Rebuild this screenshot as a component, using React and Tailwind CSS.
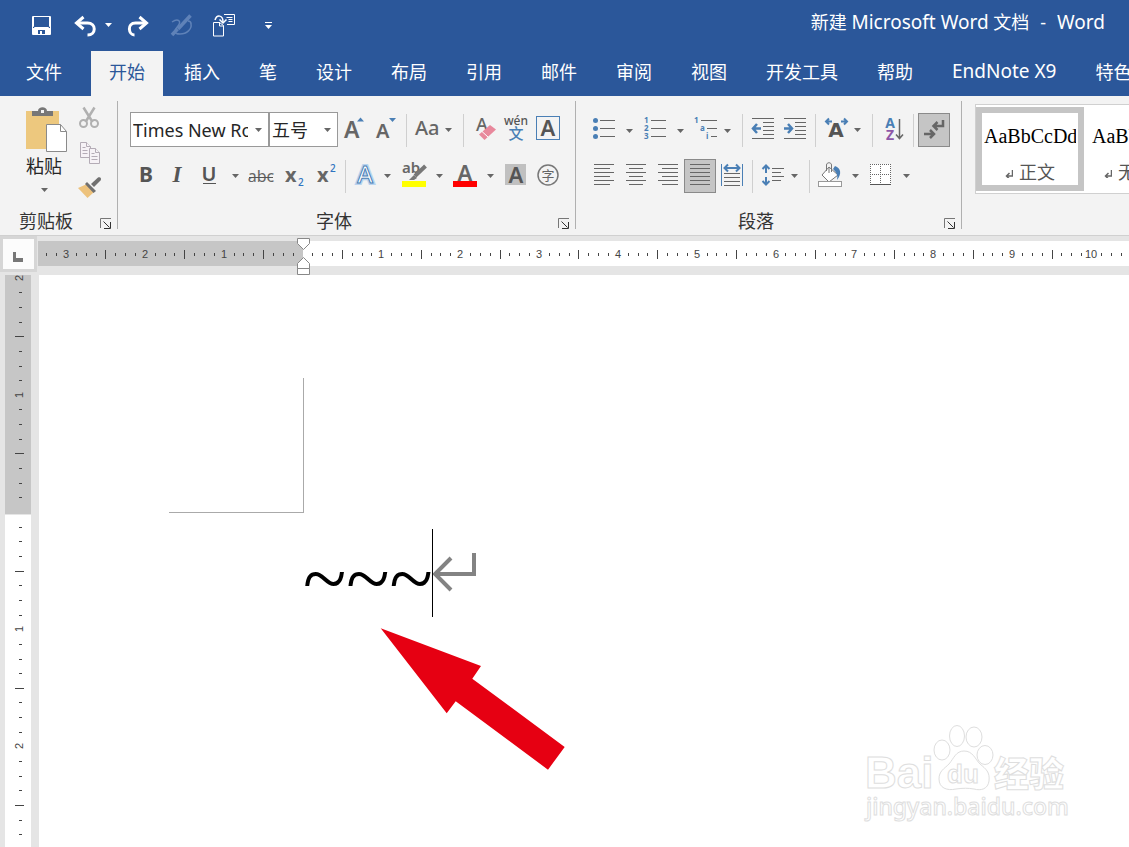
import React from 'react';

const GREY = '#666666';
const BLUE = '#4a7fb5';

const TABS = ['开始', '插入', '笔', '设计', '布局', '引用', '邮件', '审阅', '视图', '开发工具', '帮助', 'EndNote X9', '特色功能'];

const STYLES = [
  { name: '正文', active: true },
  { name: '无间隔', active: false },
];

const Arrow = ({ x, y, fill = GREY }) => <path d={`M${x} ${y}h7l-3.5 4z`} fill={fill} />;

const Tool = ({ label, w, active = false, children }) => (
  <button
    aria-label={label}
    className={active ? 'shrink-0 bg-[#c5c5c5] outline outline-1 -outline-offset-1 outline-[#8a8a8a]' : 'shrink-0'}
  >
    <svg width={w} height="34" className="block">
      {children}
    </svg>
  </button>
);

const Sep = () => <div className="h-[33px] w-px shrink-0 bg-[#cfcfcf]" />;

const Lines = ({ rows, color = GREY }) => (
  <g fill={color}>
    {rows.map(([x, y, w], i) => (
      <rect key={i} x={x} y={y} width={w} height="1" />
    ))}
  </g>
);

const GroupLabel = ({ name }) => (
  <div className="mt-auto flex h-4 items-center">
    <span className="flex-1 pr-2 text-center text-lg leading-4 text-[#333]">{name}</span>
    <button aria-label={`${name}设置`} className="self-end">
      <svg width="12" height="11" className="block" fill="none">
        <path d="M.5 10V.5H11" stroke="#777" />
        <path d="M3.500 3.500l6 6M10.500 4v6.500H4" stroke="#333" />
      </svg>
    </button>
  </div>
);

const Combo = ({ label, value, className }) => (
  <div className={`relative h-[35px] shrink-0 ${className}`}>
    <select
      aria-label={label}
      className="h-full w-full appearance-none border border-[#999] bg-white pr-5 pl-[2px] text-lg text-[#262626]"
    >
      <option>{value}</option>
    </select>
    <svg width="7" height="4" className="pointer-events-none absolute top-4 right-[7px]">
      <Arrow x={0} y={0} />
    </svg>
  </div>
);

const TitleBar = () => (
  <header className="flex h-[51px] items-center pr-6 pb-[2px] pl-[31px] text-white">
    <div className="flex shrink-0 items-center">
      <button aria-label="保存">
        <svg width="43" height="24" className="block" fill="none">
          <path d="M1.500 3.500h18v18h-18z" stroke="#fff" />
          <path d="M2.500 4v9.500l1 1h14l1-1V4" stroke="#fff" />
          <path d="M2 15h17v7h-5v-5H7v5H2z" fill="#fff" />
          <path d="M9 18h2v4H9z" fill="#fff" />
        </svg>
      </button>
      <button aria-label="撤消">
        <svg width="53" height="24" className="block" fill="none">
          <path d="M3 10h10.500c9 0 9 12 0 12" stroke="#fff" strokeWidth="3" />
          <path d="M9.500 4L2.500 10l7 6" stroke="#fff" strokeWidth="3" />
          <Arrow x={31} y={10} fill="#fff" />
        </svg>
      </button>
      <button aria-label="恢复">
        <svg width="42" height="24" className="block" fill="none">
          <path d="M19 10H8.500c-9 0-7 12-1 12" stroke="#fff" strokeWidth="3" />
          <path d="M12.500 4l7 6-7 6" stroke="#fff" strokeWidth="3" />
        </svg>
      </button>
      <button aria-label="墨迹">
        <svg width="43" height="24" className="block" fill="none" stroke="#5f82b8">
          <path d="M3 9C9 5 13 8 9 13s-5 8 2 8 12-5 11-10c0-2-1-3-3-3" strokeWidth="1.500" />
          <path d="M21.500 2.500L9 16" strokeWidth="3.500" />
          <path d="M8.500 16L3 22" strokeWidth="3.500" />
        </svg>
      </button>
      <button aria-label="插入样式">
        <svg width="52" height="24" className="block" fill="none" stroke="#fff">
          <path d="M1.500 9.500h6l4 3v10.500h-10z" />
          <path d="M7.500 9v4h4" />
          <path d="M3 7C5 1 11 2 11 9" strokeWidth="1.500" />
          <path d="M7.500 6.500L11 10l3.500-3.500" strokeWidth="1.500" />
          <path d="M12 1.500h10.500v10H15M14.500 4.500h6M16.500 6.500h4M16.500 8.500h4" />
        </svg>
      </button>
      <button aria-label="自定义快速访问工具栏">
        <svg width="10" height="24" className="block">
          <rect x="1" y="9" width="7" height="1" fill="#fff" />
          <Arrow x={1} y={12} fill="#fff" />
        </svg>
      </button>
    </div>
    <h1 className="ml-auto pb-1 text-lg whitespace-nowrap">
      新建 <span className="text-[19px]">Microsoft Word</span> 文档
      <span className="px-[11px]">-</span>
      <span className="text-[19px]">Word</span>
    </h1>
  </header>
);

const TabBar = () => (
  <nav className="flex h-[45px] overflow-hidden text-lg whitespace-nowrap text-white">
    <button className="w-[91px] shrink-0 pb-[3px] pl-[26px] text-left">文件</button>
    <div className="flex gap-[3px]">
      {TABS.map((tab) => (
        <button
          key={tab}
          className={tab === '开始' ? 'shrink-0 bg-[#f3f3f3] px-[18px] pb-[3px] text-[#2b579a]' : 'shrink-0 px-[18px] pb-[3px]'}
        >
          {tab.startsWith('EndNote') ? <span className="text-[19px]">{tab}</span> : tab}
        </button>
      ))}
    </div>
  </nav>
);

const ClipboardGroup = () => (
  <section className="flex h-32 w-[118px] shrink-0 flex-col border-r border-[#b0b0b0] pt-[5px] pr-[5px]">
    <div className="flex pl-5">
      <button className="flex w-[48px] flex-col items-center text-lg leading-6 text-[#262626]">
        <svg width="48" height="48" className="block shrink-0" fill="none">
          <path d="M6 5h33v38H6z" fill="#edc87e" />
          <path d="M12 10V5h6c0-5 9-5 9 0h6v5z" fill="#777" />
          <path d="M21 4h3v3h-3z" fill="#f3f3f3" />
          <path d="M26.500 18.500h14l6 7v20h-20z" fill="#fff" stroke="#8a8a8a" />
          <path d="M40.500 18.500v7h6" stroke="#8a8a8a" />
        </svg>
        粘贴
        <svg width="7" height="14" className="block">
          <Arrow x={0} y={10} />
        </svg>
      </button>
      <div className="ml-[10px] flex flex-col gap-[11px]">
        <button aria-label="剪切">
          <svg width="24" height="24" className="block" fill="none" stroke="#b0b0b0">
            <path d="M5.500 1.500L14.500 16M16.500 1.500L7.500 16" strokeWidth="2.500" />
            <circle cx="5.500" cy="17.500" r="3.500" strokeWidth="2" />
            <circle cx="16.500" cy="17.500" r="3.500" strokeWidth="2" />
          </svg>
        </button>
        <button aria-label="复制">
          <svg width="24" height="24" className="block" fill="#f6f2f6" stroke="#b4acb6">
            <path d="M2.500 1.500h6l4 4v11h-10z" />
            <path d="M8.500 1.500v4h4M4.500 6.500h3M4.500 9.500h5M4.500 12.500h5" />
            <path d="M11.500 7.500h6l4 4v11h-10z" />
            <path d="M17.500 7.500v4h4M13.500 12.500h3M13.500 15.500h6M13.500 18.500h6" />
          </svg>
        </button>
        <button aria-label="格式刷">
          <svg width="24" height="24" className="block">
            <path d="M0 12l9-4 7 8-6.500 6z" fill="#edc27c" />
            <path d="M9 6l9 9-2.500 2L7 8z" fill="#707070" />
            <path d="M13 8l7-6.500c2-1 4 1 2.500 3L16 11z" fill="#707070" />
          </svg>
        </button>
      </div>
    </div>
    <GroupLabel name="剪贴板" />
  </section>
);

const FontGroup = () => (
  <section className="flex h-32 w-[458px] shrink-0 flex-col border-r border-[#b0b0b0] pt-[11px] pr-[5px]">
    <div className="flex items-end pl-3">
      <Combo label="字体" value="Times New Roman" className="w-[139px]" />
      <Combo label="字号" value="五号" className="w-[69px]" />
      <Tool label="增大字号" w={33}>
        <text x="6" y="25" fontSize="23" fill={GREY} className="font-semibold">A</text>
        <path d="M19 8.500h7l-3.500-4z" fill={BLUE} />
      </Tool>
      <Tool label="减小字号" w={35}>
        <text x="5" y="25" fontSize="20" fill={GREY} className="font-semibold">A</text>
        <path d="M18 5h7l-3.500 4z" fill={BLUE} />
      </Tool>
      <Sep />
      <Tool label="更改大小写" w={56}>
        <text x="8" y="22" fontSize="20" fill={GREY} className="font-medium">Aa</text>
        <Arrow x={38} y={15} />
      </Tool>
      <Sep />
      <Tool label="清除所有格式" w={38}>
        <text x="12" y="18" fontSize="18" fill={GREY} className="font-medium">A</text>
        <path d="M15 21.500L26 12l6 4.500L20.500 27z" fill="#e8889c" />
        <path d="M18 18.500l6 5.500" stroke="#fff" />
      </Tool>
      <Tool label="拼音指南" w={28}>
        <text x="14" y="12" fontSize="12" textAnchor="middle" fill="#555" className="font-medium">wén</text>
        <text x="14" y="26" fontSize="15" textAnchor="middle" fill={BLUE} className="font-medium">文</text>
      </Tool>
      <Tool label="字符边框" w={34}>
        <rect x="6.500" y="3.500" width="23" height="23" fill="none" stroke={BLUE} />
        <text x="18" y="23" fontSize="22" textAnchor="middle" fill="#555" className="font-semibold">A</text>
      </Tool>
    </div>
    <div className="mt-3 flex items-center pl-3">
      <Tool label="加粗" w={31}>
        <text x="16" y="23" fontSize="21" textAnchor="middle" fill="#555" className="font-bold">B</text>
      </Tool>
      <Tool label="倾斜" w={31}>
        <text x="16" y="23" fontSize="23" textAnchor="middle" fill="#555" className="font-['Liberation_Serif'] font-bold italic">I</text>
      </Tool>
      <Tool label="下划线" w={52}>
        <text x="17" y="22" fontSize="20" textAnchor="middle" fill="#555" className="font-semibold">U</text>
        <rect x="11" y="24" width="13" height="1" fill="#555" />
        <Arrow x={40} y={15} />
      </Tool>
      <Tool label="删除线" w={34}>
        <text x="17" y="23" fontSize="16" textAnchor="middle" fill={GREY}>abc</text>
        <rect x="5" y="18" width="24" height="1" fill="#555" />
      </Tool>
      <Tool label="下标" w={32}>
        <text x="7" y="23" fontSize="20" fill={GREY} className="font-bold">x</text>
        <text x="20" y="27" fontSize="10" fill="#2f74c0" className="font-medium">2</text>
      </Tool>
      <Tool label="上标" w={35}>
        <text x="7" y="23" fontSize="20" fill={GREY} className="font-bold">x</text>
        <text x="20" y="13" fontSize="10" fill="#2f74c0" className="font-medium">2</text>
      </Tool>
      <Sep />
      <Tool label="文本效果" w={52}>
        <g fontSize="24" textAnchor="middle" className="font-medium">
          <text x="19" y="24" fill="none" stroke="#b9d3ee" strokeWidth="4">A</text>
          <text x="19" y="24" fill="#fff" stroke={BLUE}>A</text>
        </g>
        <Arrow x={38} y={15} />
      </Tool>
      <Tool label="突出显示" w={50}>
        <text x="4" y="14" fontSize="15" fill={GREY} className="font-semibold">ab</text>
        <path d="M27.500 7L17 17" stroke="#777" strokeWidth="4" />
        <path d="M11 21l5-5 3 3-3 2z" fill="#777" />
        <rect x="4" y="22" width="24" height="6" fill="#ffff00" />
        <Arrow x={38} y={15} />
      </Tool>
      <Tool label="字体颜色" w={52}>
        <text x="17" y="22" fontSize="22" textAnchor="middle" fill={GREY} className="font-semibold">A</text>
        <rect x="5" y="22" width="24" height="6" fill="#ff0000" />
        <Arrow x={39} y={15} />
      </Tool>
      <Tool label="字符底纹" w={31}>
        <rect x="5" y="5" width="21" height="21" fill="#c0c0c0" />
        <text x="16" y="24" fontSize="22" textAnchor="middle" fill="#555" className="font-semibold">A</text>
      </Tool>
      <Tool label="带圈字符" w={33}>
        <circle cx="17" cy="16" r="10" fill="none" stroke="#777" strokeWidth="1.500" />
        <text x="17" y="21" fontSize="13" textAnchor="middle" fill={GREY}>字</text>
      </Tool>
    </div>
    <GroupLabel name="字体" />
  </section>
);

const alignRows = (x, full, shortX, short) =>
  [0, 1, 2, 3, 4, 5].map((i) => (i % 2 ? [shortX, 5 + i * 4, short] : [x, 5 + i * 4, full]));

const ParagraphGroup = () => (
  <section className="flex h-32 w-[386px] shrink-0 flex-col border-r border-[#b0b0b0] pt-[11px] pr-[5px]">
    <div className="flex h-[35px] items-end pl-[10px]">
      <Tool label="项目符号" w={52}>
        {[7, 15, 23].map((y) => (
          <circle key={y} cx="9.500" cy={y + 0.5} r="2.500" fill={BLUE} />
        ))}
        <Lines rows={[[14, 7, 15], [14, 15, 15], [14, 23, 15]]} />
        <Arrow x={40} y={16} />
      </Tool>
      <Tool label="编号" w={52}>
        <g fontSize="8" fill={BLUE} className="font-bold">
          <text x="6" y="10">1</text>
          <text x="6" y="18">2</text>
          <text x="6" y="26">3</text>
        </g>
        <Lines rows={[[13, 7, 15], [13, 15, 15], [13, 23, 15]]} />
        <Arrow x={39} y={16} />
      </Tool>
      <Tool label="多级列表" w={52}>
        <g fontSize="8" fill={BLUE} className="font-bold">
          <text x="4" y="10">1</text>
          <text x="10" y="18">a</text>
          <text x="16" y="26">i</text>
        </g>
        <Lines rows={[[11, 7, 16], [17, 15, 10], [21, 23, 6]]} />
        <Arrow x={34} y={16} />
      </Tool>
      <Sep />
      <Tool label="减少缩进量" w={34}>
        <Lines rows={[[9, 5, 22], [20, 9, 11], [20, 13, 11], [20, 17, 11], [20, 21, 11], [9, 25, 22]]} />
        <path d="M18 15.500h-7M14 11l-4 4.500 4 4.500" fill="none" stroke={BLUE} strokeWidth="2.500" />
      </Tool>
      <Tool label="增加缩进量" w={38}>
        <Lines rows={[[7, 5, 22], [18, 9, 11], [18, 13, 11], [18, 17, 11], [18, 21, 11], [7, 25, 22]]} />
        <path d="M7 15.500h7M11 11l4 4.500-4 4.500" fill="none" stroke={BLUE} strokeWidth="2.500" />
      </Tool>
      <Sep />
      <Tool label="中文版式" w={56}>
        <text x="20" y="24" fontSize="20" textAnchor="middle" fill="#555" className="font-['DejaVu_Sans'] font-bold">A</text>
        <path d="M16 8.500h-6M13 5.500l-3 3 3 3M25 8.500h6M28 5.500l3 3-3 3" fill="none" stroke={BLUE} strokeWidth="2" />
        <Arrow x={38} y={15} />
      </Tool>
      <Sep />
      <Tool label="排序" w={40}>
        <g fontSize="14" textAnchor="middle" className="font-bold">
          <text x="17" y="15" fill={BLUE}>A</text>
          <text x="17" y="27" fill="#8e57a8">Z</text>
        </g>
        <path d="M26.500 6v20M23 21.500l3.500 4 3.500-4" fill="none" stroke={GREY} strokeWidth="1.500" />
      </Tool>
      <Sep />
      <div className="ml-1 flex">
        <Tool label="显示编辑标记" w={32} active>
          <g fill="none" stroke={GREY} strokeWidth="2">
            <path d="M25 7v6H15M19.500 9l-4 4 4 4" strokeWidth="2.500" />
            <path d="M6 21h10M12 17l4 4-4 4" strokeWidth="2.500" />
          </g>
        </Tool>
      </div>
    </div>
    <div className="mt-3 flex items-center pl-[10px]">
      <Tool label="左对齐" w={34}>
        <Lines rows={alignRows(8, 20, 8, 16)} />
      </Tool>
      <Tool label="居中" w={32}>
        <Lines rows={alignRows(6, 20, 9, 14)} />
      </Tool>
      <Tool label="右对齐" w={32}>
        <Lines rows={alignRows(6, 20, 10, 16)} />
      </Tool>
      <Tool label="两端对齐" w={32} active>
        <Lines rows={alignRows(6, 20, 6, 20)} />
      </Tool>
      <Tool label="分散对齐" w={36}>
        <path d="M5.500 5v22M26.500 5v22" stroke={BLUE} />
        <path d="M8 9h16M12 5.500L8.500 9l3.500 3.500M20 5.500L23.500 9 20 12.500" fill="none" stroke={BLUE} strokeWidth="2" />
        <Lines rows={[[8, 14, 16], [8, 18, 16], [8, 22, 16], [8, 26, 16]]} />
      </Tool>
      <Sep />
      <Tool label="行距" w={56}>
        <path d="M13 7v7M13 18v7M9.500 10L13 6.500l3.500 3.500M9.500 22l3.500 3.500 3.500-3.500" fill="none" stroke={BLUE} strokeWidth="2" />
        <Lines rows={[[19, 9, 12], [19, 13, 9], [19, 17, 12], [19, 21, 9]]} />
        <Arrow x={38} y={15} />
      </Tool>
      <Sep />
      <Tool label="底纹" w={54}>
        <path d="M12 16l7-8 9 8-9 7z" fill="#fff" stroke="#777" />
        <path d="M16.500 12V6c0-3 5-3 5 0v7M19 9v5" fill="none" stroke="#777" />
        <path d="M25 7c6 2 7 8 2 14 1-5 0-7-4-11z" fill={BLUE} />
        <rect x="8.500" y="22.500" width="23" height="5" fill="#fff" stroke="#999" />
        <Arrow x={42} y={15} />
      </Tool>
      <Tool label="边框" w={50}>
        <rect x="6" y="5" width="21" height="21" fill="#fff" />
        <path d="M6 5.500h21M6 15.500h21M6.500 5v21M16.500 5v21M26.500 5v21" stroke={GREY} strokeDasharray="1 1" />
        <path d="M6 25.500h21" stroke="#555" />
        <Arrow x={39} y={15} />
      </Tool>
    </div>
    <GroupLabel name="段落" />
  </section>
);

const StyleGallery = () => (
  <div className="mt-[3px] ml-[13px] flex h-[90px] flex-1 overflow-hidden border-y border-l border-[#d0d0d0] bg-white py-[2px]">
    {STYLES.map(({ name, active }) => (
      <button
        key={name}
        className={`flex w-[108px] shrink-0 flex-col border-[6px] pt-[9px] ${active ? 'border-[#c5c5c5]' : 'border-white'}`}
      >
        <span className="w-full px-[2px]">
          <span className="block overflow-hidden text-left font-['Liberation_Serif'] text-xl whitespace-nowrap text-black">
            AaBbCcDd
          </span>
        </span>
        <span className="mt-[10px] flex w-full items-center justify-center gap-[6px] text-lg leading-6 text-[#555]">
          <svg width="8" height="12" fill="none" stroke={GREY}>
            <path d="M7.500 4v6H2M4.500 7l-3 3 3 3" strokeWidth="1.500" />
          </svg>
          {name}
        </span>
      </button>
    ))}
  </div>
);

const LEFT_WIDTH = 265;
const UNIT = 78.85;
const V_UNIT = 117.2;

// ticks are counted from the margin: every 8th carries a number, every 4th is tall
const HorizontalTicks = ({ origin, dir, count }) => (
  <g fill="#444">
    {Array.from({ length: count }, (_, i) => i + 1).map((k) => {
      const x = Math.floor(origin + (dir * k * UNIT) / 8);
      if (k % 8 === 0) {
        return (
          <text key={k} x={x} y="17" fontSize="11" textAnchor="middle" className="font-['Liberation_Sans']">
            {k / 8}
          </text>
        );
      }
      return k % 4 === 0 ? (
        <rect key={k} x={x} y="9" width="1" height="9" />
      ) : (
        <rect key={k} x={x} y="12" width="1" height="3" />
      );
    })}
  </g>
);

const VerticalTicks = ({ origin, dir, count }) => (
  <g fill="#444">
    {Array.from({ length: count }, (_, i) => i + 1).map((k) => {
      const y = Math.round(origin + (dir * k * V_UNIT) / 8);
      if (k % 8 === 0) {
        return (
          <text
            key={k}
            x="18"
            y={y}
            fontSize="11"
            textAnchor="middle"
            transform={`rotate(-90 18 ${y})`}
            className="font-['Liberation_Sans']"
          >
            {k / 8}
          </text>
        );
      }
      return k % 4 === 0 ? (
        <rect key={k} x="10" y={y} width="9" height="1" />
      ) : (
        <rect key={k} x="14" y={y} width="3" height="1" />
      );
    })}
  </g>
);

const HorizontalRuler = () => (
  <div className="flex h-[39px] bg-[#e5e5e5]">
    <div className="mr-px h-[36px] w-[37px] shrink-0 bg-[#d6d6d6] p-[3px]">
      <button aria-label="制表符" className="block h-[30px] w-[31px] bg-[#fcfcfc]">
        <svg width="31" height="30">
          <path d="M10 13h3v6h7v4H10z" fill="#777" />
        </svg>
      </button>
    </div>
    <div className="relative mt-[5px] flex h-[25px] flex-1">
      <svg width={LEFT_WIDTH} height="25" className="shrink-0 bg-[#c6c6c6]">
        <HorizontalTicks origin={265} dir={-1} count={26} />
      </svg>
      <div className="flex-1 overflow-hidden bg-white">
        <svg width="2400" height="25" className="max-w-none">
          <HorizontalTicks origin={0} dir={1} count={240} />
        </svg>
      </div>
      <svg width="15" height="38" fill="#fff" stroke="#888" className="absolute -top-[3px] left-[258px]">
        <path d="M1.500.5h12v5l-6 6-6-6z" />
        <path d="M1.500 30.500v-5l6-6 6 6v5zM1.500 30.500h12v6h-12z" />
      </svg>
    </div>
  </div>
);

const VerticalRuler = () => (
  <div className="flex w-[39px] shrink-0 flex-col bg-[#e5e5e5] pr-2 pl-[5px]">
    <svg width="26" height="239" className="block shrink-0 bg-[#c6c6c6]">
      <VerticalTicks origin={237} dir={-1} count={16} />
    </svg>
    <div className="mt-px flex-1 overflow-hidden bg-white">
      <svg width="26" height="332" className="block">
        <VerticalTicks origin={-3} dir={1} count={22} />
      </svg>
    </div>
  </div>
);

const Watermark = () => (
  <svg
    width="215"
    height="105"
    fill="#fff"
    stroke="#dedede"
    className="absolute right-[54px] bottom-[22px]"
  >
    <text x="5" y="68" fontSize="44" className="font-['Liberation_Sans'] font-bold">Bai</text>
    <ellipse cx="82" cy="30" rx="8" ry="10" />
    <ellipse cx="97" cy="16" rx="7.500" ry="10.500" />
    <ellipse cx="114" cy="17" rx="8" ry="10" />
    <ellipse cx="125" cy="35" rx="8" ry="9.500" />
    <path d="M104 31c9 0 11 8 16 13 6 5 10 8 9 17-1 8-8 10-15 8-6-1-11-1-18 0-9 2-17-1-17-10 0-8 5-10 10-15 5-6 7-13 15-13z" />
    <text x="103" y="63" fontSize="26" textAnchor="middle" className="font-['Liberation_Sans'] font-bold">du</text>
    <text x="134" y="67" fontSize="35" className="font-black">经验</text>
    <text x="6" y="95" fontSize="23" className="font-medium">jingyan.baidu.com</text>
  </svg>
);

const Page = () => (
  <main className="relative flex-1 overflow-hidden bg-white pt-[103px] pl-[130px]">
    <div className="h-[135px] w-[135px] border-r border-b border-[#aaa]" />
    <div className="mt-4 ml-[134px] flex h-[88px]">
      <p className="font-['Liberation_Serif'] text-[80px] leading-[100px] text-black">~~~</p>
      <div className="-ml-px w-px bg-black" />
      <svg width="44" height="88" fill="none" stroke="#838383" strokeWidth="4" className="shrink-0">
        <path d="M41 24v21H3M18 29L2 45l16 16" />
      </svg>
    </div>
    <svg width="186" height="144" className="absolute top-[352px] left-[341px]">
      <path d="M.7 1.300L101 39l-8.700 12.700L184.700 120 168 142.700 75.700 74.300l-9 12z" fill="#e60012" />
    </svg>
    <Watermark />
  </main>
);

const App = () => {
  return (
    <div className="flex min-h-screen flex-col overflow-hidden bg-[#2b579a] font-['Noto_Sans','Noto_Sans_CJK_SC',sans-serif]">
      <TitleBar />
      <TabBar />
      <div className="flex border-b border-[#d0d0d0] bg-[#f3f3f3] pt-[5px] pb-[6px]">
        <ClipboardGroup />
        <FontGroup />
        <ParagraphGroup />
        <StyleGallery />
      </div>
      <HorizontalRuler />
      <div className="flex flex-1">
        <VerticalRuler />
        <Page />
      </div>
    </div>
  );
};

export default App;
